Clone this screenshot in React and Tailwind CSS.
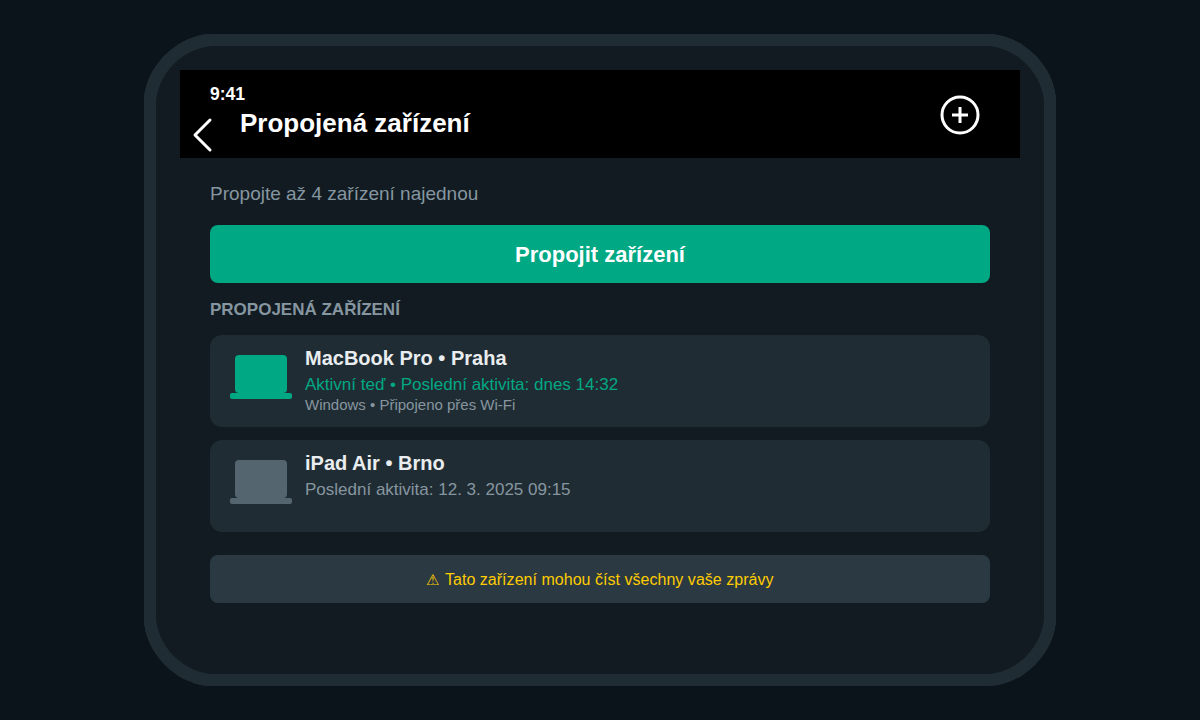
import clsx from "clsx";

const DEVICES = [
  {
    name: "MacBook Pro • Praha",
    activity: "Aktivní teď • Poslední aktivita: dnes 14:32",
    details: "Windows • Připojeno přes Wi-Fi",
    active: true,
  },
  {
    name: "iPad Air • Brno",
    activity: "Poslední aktivita: 12. 3. 2025 09:15",
    active: false,
  },
];

function BackIcon() {
  return (
    <svg className="block h-9 w-6" viewBox="0 0 24 36" fill="none" stroke="white" strokeWidth="3" strokeLinecap="round" strokeLinejoin="round">
      <path d="M20 3 L5 18 L20 33" />
    </svg>
  );
}

function AddIcon() {
  return (
    <svg className="block h-10 w-10" viewBox="0 0 40 40" fill="none" stroke="white" strokeWidth="3">
      <circle cx="20" cy="20" r="18" />
      <path d="M20 12 V28 M12 20 H28" />
    </svg>
  );
}

function LaptopIcon({ active }) {
  return (
    <svg className={clsx("block h-11 w-[62px]", active ? "fill-[#00a884]" : "fill-[#54656f]")} viewBox="0 0 62 44">
      <rect x="5" width="52" height="38" rx="4" />
      <rect y="38" width="62" height="6" rx="2" />
    </svg>
  );
}

function DeviceCard({ device }) {
  return (
    <li className="flex h-[92px] gap-[13px] rounded-xl bg-[#202c33] pl-5">
      <div className="pt-5">
        <LaptopIcon active={device.active} />
      </div>
      <div className="whitespace-nowrap pt-[11px]">
        <div className="text-[20px] leading-6 font-bold text-[#e9edef]">{device.name}</div>
        <div className={clsx("mt-[5px] text-[17px] leading-5", device.active ? "text-[#00a884]" : "text-[#8696a0]")}>
          {device.activity}
        </div>
        {device.details && <div className="mt-px text-[15px] leading-[18px] text-[#8696a0]">{device.details}</div>}
      </div>
    </li>
  );
}

export default function App() {
  return (
    <div className="flex h-[720px] w-[1200px] items-center justify-center bg-[#0b141a] font-['Liberation_Sans',Arial,sans-serif]">
      <div className="h-[652px] w-[912px] rounded-[68px] border-12 border-[#202c33] bg-[#111b21] px-6 pt-6 [corner-shape:superellipse(0.9)]">
        <header className="flex h-[88px] justify-between bg-black pr-10 text-white">
          <div>
            <div className="pt-3.5 pl-[30px] text-[17.5px] leading-5 font-bold">9:41</div>
            <div className="flex pl-[10px]">
              <button className="mt-[13px]" aria-label="Zpět">
                <BackIcon />
              </button>
              <h1 className="pt-1 pl-[26px] text-[26px] leading-[30px] font-bold whitespace-nowrap">Propojená zařízení</h1>
            </div>
          </div>
          <button className="mt-[25px] h-10" aria-label="Přidat">
            <AddIcon />
          </button>
        </header>

        <main className="px-[30px]">
          <p className="pt-[24px] text-[19px] leading-[23px] text-[#8696a0]">Propojte až 4 zařízení najednou</p>
          <button className="mt-5 block h-[58px] w-full rounded-lg bg-[#00a884] text-[22px] font-bold text-white">
            Propojit zařízení
          </button>
          <h2 className="mt-[17px] text-[17px] leading-5 font-bold text-[#8696a0]">PROPOJENÁ ZAŘÍZENÍ</h2>
          <ul className="mt-[15px] flex flex-col gap-[13px]">
            {DEVICES.map((d) => (
              <DeviceCard key={d.name} device={d} />
            ))}
          </ul>
          <div className="mt-[23px] flex h-12 items-center justify-center rounded-lg bg-[#2a3942] pt-0.5 text-[16px] tracking-[0.03px] text-[#ffcc00]">
            <span className="mr-[5.5px] text-[15px]">⚠</span>
            <span>Tato zařízení mohou číst všechny vaše zprávy</span>
          </div>
        </main>
      </div>
    </div>
  );
}
